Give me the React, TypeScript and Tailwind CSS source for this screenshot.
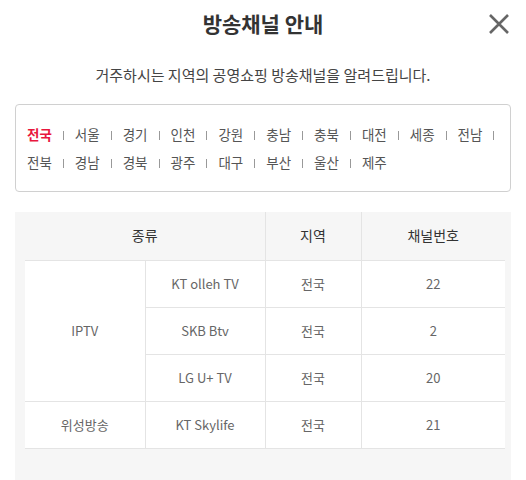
const regions = [
  '전국', '서울', '경기', '인천', '강원', '충남', '충북', '대전', '세종', '전남',
  '전북', '경남', '경북', '광주', '대구', '부산', '울산', '제주',
]

const rows = [
  { name: 'KT olleh TV', area: '전국', ch: '22' },
  { name: 'SKB Btv', area: '전국', ch: '2' },
  { name: 'LG U+ TV', area: '전국', ch: '20' },
]

export default function App() {
  return (
    <div
      className="w-[526px] h-[480px] overflow-hidden bg-white text-[#333]"
      style={{ fontFamily: '"Noto Sans CJK KR", "Noto Sans", sans-serif' }}
    >
      <header className="relative h-[46px] flex items-center justify-center">
        <h1 className="text-[21px] font-bold leading-none text-[#333]">방송채널 안내</h1>
        <button className="absolute right-[16px] top-[13px] w-[22px] h-[22px]" aria-label="닫기">
          <svg viewBox="0 0 22 22" className="w-[22px] h-[22px]">
            <path d="M2 2 L20 20 M20 2 L2 20" stroke="#666" strokeWidth="2.6" fill="none" />
          </svg>
        </button>
      </header>

      <p className="mt-[19px] text-center text-[15px] leading-5 text-[#444]">
        거주하시는 지역의 공영쇼핑 방송채널을 알려드립니다.
      </p>

      <div className="mx-[15px] mt-[19px] h-[88px] rounded-[4px] border border-[#d0d0d0] pl-[11px] pr-0 py-[15px]">
        <ul className="flex flex-wrap text-[13.5px] leading-[28px] text-[#555]">
          {regions.map((r, i) => (
            <li key={r} className="flex items-center">
              <span className={i === 0 ? 'font-bold text-[#e8173d]' : ''}>{r}</span>
              {i !== regions.length - 1 && (
                <span className="mx-[11px] w-px h-[9px] bg-[#999] mt-[3px]" />
              )}
            </li>
          ))}
        </ul>
      </div>

      <div className="mx-[15px] mt-[20px] h-[300px] bg-[#f6f6f6] px-[10px]">
        <table className="w-[480px] border-collapse text-center text-[13px] text-[#666]">
          <colgroup>
            <col className="w-[120px]" />
            <col className="w-[120px]" />
            <col className="w-[96px]" />
            <col className="w-[144px]" />
          </colgroup>
          <thead>
            <tr className="h-[48px] text-[14px] text-[#333]">
              <th colSpan={2} className="font-normal border-b border-[#e4e4e4]">종류</th>
              <th className="font-normal border-b border-l border-[#e4e4e4]">지역</th>
              <th className="font-normal border-b border-l border-[#e4e4e4]">채널번호</th>
            </tr>
          </thead>
          <tbody className="bg-white">
            {rows.map((row, i) => (
              <tr key={row.name} className="h-[47px]">
                {i === 0 && (
                  <td rowSpan={3} className="border-b border-[#e4e4e4]">IPTV</td>
                )}
                <td className="border-b border-l border-[#e4e4e4]">{row.name}</td>
                <td className="border-b border-l border-[#e4e4e4]">{row.area}</td>
                <td className="border-b border-l border-[#e4e4e4]">{row.ch}</td>
              </tr>
            ))}
            <tr className="h-[47px]">
              <td className="border-b border-[#e4e4e4]">위성방송</td>
              <td className="border-b border-l border-[#e4e4e4]">KT Skylife</td>
              <td className="border-b border-l border-[#e4e4e4]">전국</td>
              <td className="border-b border-l border-[#e4e4e4]">21</td>
            </tr>
          </tbody>
        </table>
      </div>
    </div>
  )
}
